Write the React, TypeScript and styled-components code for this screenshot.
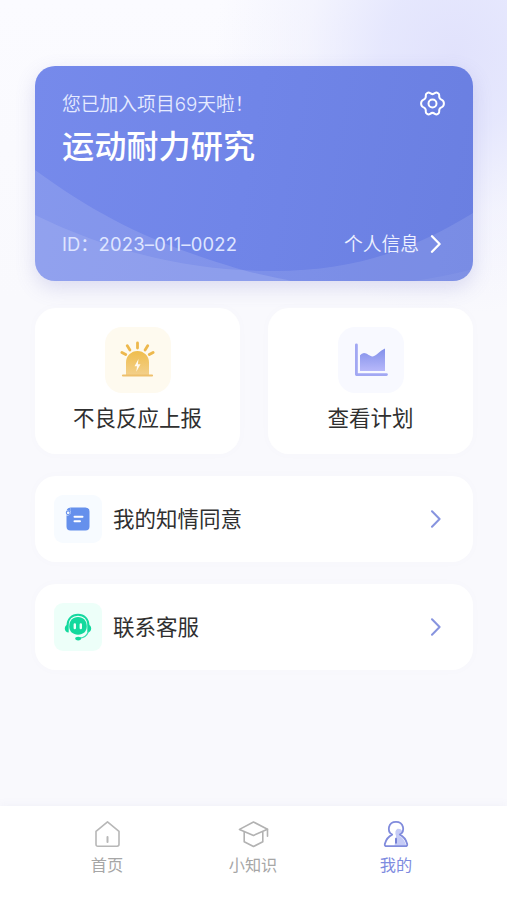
import React from "react";
import styled, { createGlobalStyle } from "styled-components";

const GlobalStyle = createGlobalStyle`
  * { box-sizing: border-box; }
  body { margin: 0; background: #f9f9fd; }
  button { border: 0; padding: 0; background: none; font: inherit; color: inherit; }
`;

const Screen = styled.div`
  width: 507px;
  height: 900px;
  overflow: hidden;
  display: flex;
  flex-direction: column;
  font-family: Inter, "Noto Sans CJK SC", sans-serif;
  color: #333;
  background:
    radial-gradient(ellipse 240px 260px at 455px 55px, #e1e2fc 0%, rgba(226, 228, 253, 0.85) 30%, rgba(236, 237, 253, 0.5) 62%, rgba(249, 249, 253, 0) 100%),
    linear-gradient(#fbfbff 0, #f9f9fd 300px);
`;

const Content = styled.main`
  flex: 1;
  padding: 66px 34px 0 35px;
  display: flex;
  flex-direction: column;
`;

const ProjectCard = styled.section`
  position: relative;
  height: 215px;
  border-radius: 20px;
  overflow: hidden;
  padding: 25px 28px 23px 27px;
  display: flex;
  flex-direction: column;
  justify-content: space-between;
  color: #fff;
  background: linear-gradient(100deg, #768aeb 0%, #7085e8 48%, #6a7fe1 100%);
`;

const CardShadow = styled.div`
  border-radius: 20px;
  box-shadow: 0 7px 20px rgba(105, 105, 190, 0.2);
`;

const Waves = styled.svg`
  position: absolute;
  inset: 0;
`;

const CardRow = styled.div`
  position: relative;
  display: flex;
  justify-content: space-between;
  align-items: center;

  > svg { margin-top: -3px; }
`;

const Joined = styled.p`
  margin: 0;
  font-size: 18.8px;
  line-height: 27px;
  font-weight: 350;
  color: #e6ebff;
`;

const Title = styled.h1`
  position: relative;
  margin: 6px 0 0;
  font-size: 32.2px;
  line-height: 46px;
  font-weight: 500;
`;

const ProjectId = styled.span`
  font-size: 18.4px;
  line-height: 27px;
  font-weight: 400;
  color: #dfe5ff;
  white-space: nowrap;
`;

const IdNumber = styled.span`
  letter-spacing: 0.2px;
`;

const InfoLink = styled.button`
  display: flex;
  align-items: center;
  gap: 11px;
  font-size: 18.8px;
  line-height: 27px;
  font-weight: 350;
  color: #eef1ff;
  padding-right: 3px;

  > svg { margin-top: -2px; }
`;

const Tiles = styled.div`
  display: grid;
  grid-template-columns: 205px 205px;
  justify-content: space-between;
  margin-top: 27px;
`;

const Tile = styled.button`
  height: 146px;
  border-radius: 21px;
  background: #fff;
  display: flex;
  flex-direction: column;
  align-items: center;
  padding-top: 19px;
  gap: 9px;
  box-shadow: 0 0 10px rgba(120, 120, 180, 0.025);
`;

const IconBox = styled.span<{ $size: number; $tint: string }>`
  width: ${(p) => p.$size}px;
  height: ${(p) => p.$size}px;
  border-radius: ${(p) => (p.$size > 50 ? 17 : 9)}px;
  background: ${(p) => p.$tint};
  display: grid;
  place-items: center;
  flex: none;
`;

const Label = styled.span`
  font-size: 21.5px;
  line-height: 32px;
  color: #303030;
`;

const Row = styled.button`
  height: 86px;
  margin-top: 22px;
  border-radius: 21px;
  background: #fff;
  display: flex;
  align-items: center;
  padding: 0 31px 0 19px;
  box-shadow: 0 0 10px rgba(120, 120, 180, 0.025);

  ${Label} { margin-left: 11px; }
  > svg { margin-left: auto; }
`;

const TabBar = styled.nav`
  height: 94px;
  background: #fff;
  box-shadow: 0 -2px 8px rgba(120, 120, 180, 0.05);
  display: flex;
  justify-content: space-between;
  padding: 14px 78px 0 74px;
`;

const Tab = styled.button<{ $active?: boolean }>`
  width: 66px;
  display: flex;
  flex-direction: column;
  align-items: center;
  gap: 4px;
  font-size: 16.2px;
  line-height: 25px;
  white-space: nowrap;
  color: ${(p) => (p.$active ? "#7e8be0" : "#a6a6a6")};

  &:nth-child(2) { padding-left: 3px; }
`;

const Chevron = ({ color, width = 2 }: { color: string; width?: number }) => (
  <svg width="12" height="18" viewBox="0 0 12 18" fill="none" stroke={color} strokeWidth={width}>
    <path d="M2 1.2 9.6 9 2 16.8" strokeLinecap="round" strokeLinejoin="round" />
  </svg>
);

const GearIcon = () => (
  <svg width="25" height="25" viewBox="0 0 25 25" fill="none" stroke="#fff" strokeWidth="2" strokeLinejoin="round">
    <path d="M7.1 2.1 Q8.6 1.1 10.1 2.1 Q12.5 4.1 14.9 2.1 Q16.4 1.1 17.9 2.1 Q19.4 3 19.2 4.7 Q18.9 8 21.8 8.9 Q23.9 9.8 23.9 12.5 Q23.9 15.2 21.8 16.1 Q18.9 17 19.2 20.3 Q19.4 22 17.9 22.9 Q16.4 23.9 14.9 22.9 Q12.5 20.9 10.1 22.9 Q8.6 23.9 7.1 22.9 Q5.6 22 5.8 20.3 Q6.1 17 3.2 16.1 Q1.1 15.2 1.1 12.5 Q1.1 9.8 3.2 8.9 Q6.1 8 5.8 4.7 Q5.6 3 7.1 2.1 Z" />
    <circle cx="12.5" cy="12.5" r="4" />
  </svg>
);

const AlarmIcon = () => (
  <svg width="36" height="38" viewBox="0 0 36 38">
    <defs>
      <linearGradient id="alarm" x1="0" y1="0" x2="0" y2="1">
        <stop offset="0" stopColor="#efbd4c" />
        <stop offset="1" stopColor="#f3d08c" />
      </linearGradient>
    </defs>
    <path
      d="M17.5 2v5M7.3 4.8l2.6 4.2M27.700 4.800l-2.600 4.200M1.900 11.500l3.800 2.100M33.100 11.500l-3.800 2.100"
      stroke="#edb84d" strokeWidth="2.800" strokeLinecap="round"
    />
    <path d="M6 34.500V21.500a11.500 11.500 0 0 1 23 0v13z" fill="url(#alarm)" />
    <path d="M3 34.500h29" stroke="#eec06d" strokeWidth="2.200" strokeLinecap="round" />
    <path d="M18.500 18l-4 7.200H17l-.7 5.500 4.200-7.400h-2.600z" fill="#fffaf0" />
  </svg>
);

const ChartIcon = () => (
  <svg width="34" height="34" viewBox="0 0 34 34">
    <defs>
      <linearGradient id="chart" x1="0" y1="0" x2="0" y2="1">
        <stop offset="0" stopColor="#8290ea" />
        <stop offset="1" stopColor="#b7b8fa" />
      </linearGradient>
    </defs>
    <path d="M2.400 1.800v29.800H32.500" fill="none" stroke="#a2a8f3" strokeWidth="2.800" strokeLinecap="round" strokeLinejoin="round" />
    <path d="M6 28V12.200q1.600-2 4-2.200c3.200 0 5.600 3.600 8.700 3.400C22.500 13 26 7.600 31 5.600V28z" fill="url(#chart)" />
  </svg>
);

const ConsentIcon = () => (
  <svg width="26" height="26" viewBox="0 0 26 26">
    <path d="M5.500 1.500h15q4 0 4 4v15q0 4-4 4h-15q-4 0-4-4V9.200a3 3 0 0 0 4-4z" fill="#6590ec" />
    <circle cx="3.200" cy="6.800" r="1.900" fill="#f7fbff" stroke="#6590ec" strokeWidth="1.100" />
    <path d="M5.500 1.500q-3 0-3.700 2.500l3.700 1z" fill="#6590ec" />
    <path d="M9.500 10.800h8M9.500 15.300h5.500" stroke="#fff" strokeWidth="2" strokeLinecap="round" />
  </svg>
);

const SupportIcon = () => (
  <svg width="28" height="28" viewBox="0 0 28 28" fill="none">
    <path d="M3.500 12.500C3.500 5.800 7.900 1.800 14 1.800s10.500 4 10.500 10.700" stroke="#16d9a0" strokeWidth="1.900" />
    <path d="M14 4c5.300 0 8.800 3.800 8.800 9.500 0 4.800-3.600 8.200-8.800 8.200s-8.800-3.400-8.800-8.200C5.200 7.800 8.700 4 14 4z" fill="#12d99d" />
    <path d="M4.700 11.200C2 11.500.8 13.200.8 15.500s1.300 3.900 3.900 4zM23.300 11.200c2.700.3 3.900 2 3.900 4.300s-1.300 3.900-3.900 4z" fill="#12d99d" />
    <path d="M10.800 11.500v3.600M16.800 11.500v3.600" stroke="#effff9" strokeWidth="2.400" strokeLinecap="round" />
    <path d="M24.500 18.500c-1.500 3.800-4.500 6.200-8.500 6.700" stroke="#3adfb1" strokeWidth="1.200" />
    <ellipse cx="14.200" cy="25.600" rx="3" ry="1.800" fill="#12d99d" />
  </svg>
);

const HomeIcon = () => (
  <svg width="30" height="29" viewBox="0 0 30 29" fill="none" stroke="#b7b7b7" strokeWidth="1.600" strokeLinejoin="round" strokeLinecap="round">
    <path d="M4 11.400 15.500 1.800 27 11.400v12.900q0 1.900-1.900 1.900H5.900Q4 26.200 4 24.300z" />
    <path d="M15.500 17v5" strokeWidth="2" />
  </svg>
);

const KnowledgeIcon = () => (
  <svg width="32" height="29" viewBox="-1 0 32 29" fill="none" stroke="#b2b2b2" strokeWidth="1.600" strokeLinejoin="round" strokeLinecap="round">
    <path d="M1.500 9.400 15.500 2l14 7.200-14 6.200z" />
    <path d="M6.200 12.300v9.500l9.300 4.700 9.300-4.700v-9.500M29.500 9.400v6.800" />
  </svg>
);

const ProfileIcon = () => (
  <svg width="28" height="29" viewBox="0 0 28 29">
    <path d="M15.500 8.800q3.300-.3 4.900 2.100-.7 2.800-3.200 4.900 4.900 2.400 7.100 9.900H12.500l1.600-9.500q-2-5.400 1.400-7.400z" fill="#c5cbf6" />
    <path d="M10.200 14.600C4.400 11.200 6.300 1.800 14 1.800s9.600 9.400 3.800 12.800q5.500 2.600 7.400 9.300.4 2.300-1.900 2.300H4.700q-2.300 0-1.900-2.300 1.900-6.700 7.400-9.300z" fill="none" stroke="#808bdc" strokeWidth="1.800" strokeLinejoin="round" />
    <path d="M14 18.700v4" stroke="#7681d7" strokeWidth="2" strokeLinecap="round" />
  </svg>
);

export default function App() {
  return (
    <>
      <GlobalStyle />
      <Screen>
        <Content>
          <CardShadow>
            <ProjectCard>
              <Waves width="438" height="215" viewBox="0 0 438 215">
                <path d="M0 104C55 144 101 168 158 188S230 209 256 215H0Z" fill="#fff" fillOpacity=".12" />
                <path d="M0 149C72 184 151 205 238 205S382 181 438 147V215H0Z" fill="#fff" fillOpacity=".1" />
                <path d="M378 215Q408 211 438 203V215Z" fill="#fff" fillOpacity=".05" />
              </Waves>
              <div>
                <CardRow>
                  <Joined>您已加入项目69天啦！</Joined>
                  <GearIcon />
                </CardRow>
                <Title>运动耐力研究</Title>
              </div>
              <CardRow>
                <ProjectId>ID：<IdNumber>2023–011–0022</IdNumber></ProjectId>
                <InfoLink>
                  个人信息
                  <Chevron color="#fff" width={2.3} />
                </InfoLink>
              </CardRow>
            </ProjectCard>
          </CardShadow>
          <Tiles>
            <Tile>
              <IconBox $size={66} $tint="#fefaef"><AlarmIcon /></IconBox>
              <Label>不良反应上报</Label>
            </Tile>
            <Tile>
              <IconBox $size={66} $tint="#f8f9ff"><ChartIcon /></IconBox>
              <Label>查看计划</Label>
            </Tile>
          </Tiles>
          <Row>
            <IconBox $size={48} $tint="#f7fbff"><ConsentIcon /></IconBox>
            <Label>我的知情同意</Label>
            <Chevron color="#8794df" />
          </Row>
          <Row>
            <IconBox $size={48} $tint="#edfff9"><SupportIcon /></IconBox>
            <Label>联系客服</Label>
            <Chevron color="#8794df" />
          </Row>
        </Content>
        <TabBar>
          <Tab><HomeIcon />首页</Tab>
          <Tab><KnowledgeIcon />小知识</Tab>
          <Tab $active><ProfileIcon />我的</Tab>
        </TabBar>
      </Screen>
    </>
  );
}
